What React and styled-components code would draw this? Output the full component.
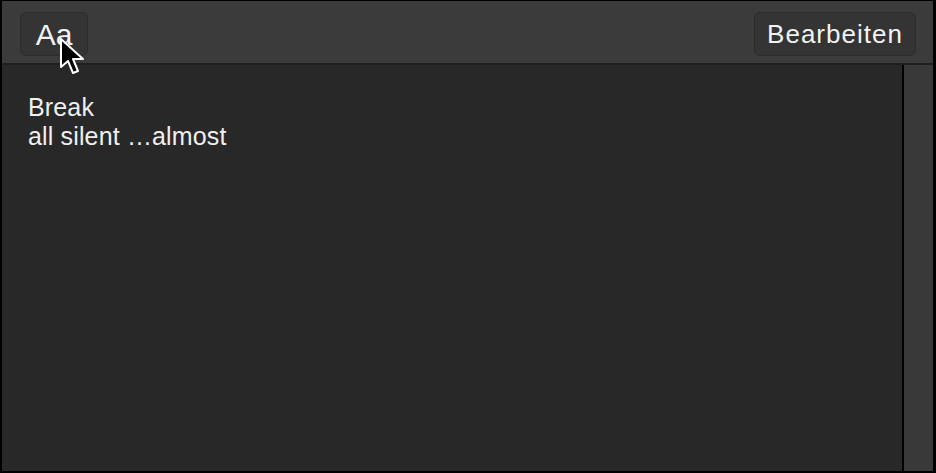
import React from "react";
import styled, { createGlobalStyle } from "styled-components";

const Global = createGlobalStyle`
  html, body { margin: 0; padding: 0; background: #000; }
  body { font-family: "Liberation Sans", Arial, sans-serif; }
`;

const Frame = styled.div`
  position: relative;
  width: 936px;
  height: 473px;
  box-sizing: border-box;
  border-style: solid;
  border-color: #000;
  border-width: 1px 3px 2px 2px;
  display: flex;
  flex-direction: column;
  background: #282828;
  overflow: hidden;
`;

const Toolbar = styled.div`
  height: 64px;
  box-sizing: border-box;
  flex: none;
  display: flex;
  align-items: center;
  justify-content: space-between;
  padding: 0 17px 0 18px;
  background: #3b3b3b;
  border-bottom: 2px solid #1f1f1f;
`;

const ToolButton = styled.button`
  height: 44px;
  width: ${(p) => p.$w}px;
  box-sizing: border-box;
  margin-top: 3px;
  border: 1px solid #2c2c2c;
  border-radius: 6px;
  background: #343434;
  color: #f2f2f2;
  font-family: "Liberation Sans", Arial, sans-serif;
  font-size: ${(p) => p.$size}px;
  letter-spacing: ${(p) => p.$ls || 0}px;
  padding: 2px 0 0;
  display: flex;
  align-items: center;
  justify-content: center;
`;

const Body = styled.div`
  flex: 1;
  display: flex;
  min-height: 0;
`;

const Content = styled.div`
  flex: 1;
  padding: 28px 0 0 26px;
  color: #efefef;
  font-size: 25px;
  line-height: 29px;
  letter-spacing: 0.15px;
`;

const Line = styled.div``;

const Scrollbar = styled.div`
  width: 29px;
  flex: none;
  border-left: 2px solid #000;
  background: #393939;
`;

const Cursor = styled.svg`
  position: absolute;
  left: 57px;
  top: 36px;
  width: 30px;
  height: 44px;
`;

export default function App() {
  return (
    <>
      <Global />
      <Frame>
        <Toolbar>
          <ToolButton $w={68} $size={30}>Aa</ToolButton>
          <ToolButton $w={162} $size={26} $ls={1}>Bearbeiten</ToolButton>
        </Toolbar>
        <Body>
          <Content>
            <Line>Break</Line>
            <Line>all silent …almost</Line>
          </Content>
          <Scrollbar />
        </Body>
        <Cursor viewBox="0 0 30 44">
          <path
            d="M2 2 L2 30 L9 24 L14 36 L19 34 L14 22 L24 22 Z"
            fill="#000"
            stroke="#fff"
            strokeWidth="2"
            strokeLinejoin="round"
          />
        </Cursor>
      </Frame>
    </>
  );
}
